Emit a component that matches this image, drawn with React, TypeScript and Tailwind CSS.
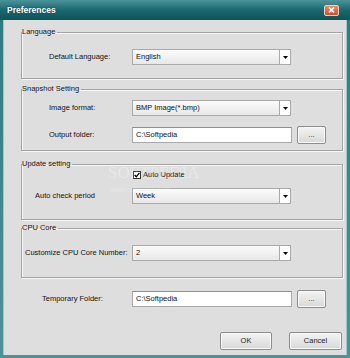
import type { ReactNode } from 'react';

const font = { fontFamily: '"Liberation Sans", Arial, sans-serif' };

function Arrow() {
  return (
    <svg width="5" height="3" viewBox="0 0 5 3" className="block">
      <polygon points="0,0 5,0 2.5,3" fill="#000" />
    </svg>
  );
}

function Select({ value }: { value: string }) {
  return (
    <div className="flex h-[16px] w-[159px] border border-[#a9a9a9]">
      <div className="flex flex-1 items-center bg-gradient-to-b from-[#fbfbfb] to-[#e8e8e8] pl-[3px] text-[#111]">
        {value}
      </div>
      <div className="flex w-[11px] items-center justify-center border-l border-[#a9a9a9] bg-white">
        <Arrow />
      </div>
    </div>
  );
}

function TextBox({ value }: { value: string }) {
  return (
    <div className="flex h-[16px] w-[160px] items-center border border-[#a9a9a9] border-t-[#8f8f8f] bg-white pl-[3px] text-[#111]">
      {value}
    </div>
  );
}

function Btn({ children, w }: { children: ReactNode; w: string }) {
  return (
    <button
      className={`flex h-[18px] ${w} items-center justify-center rounded-[2px] border border-[#8c8c8c] bg-gradient-to-b from-[#f4f4f4] to-[#d8d8d8] text-[#222] shadow-[inset_0_0_0_1px_#fafafa]`}
    >
      {children}
    </button>
  );
}

function Group({ title, className, children }: { title: string; className: string; children: ReactNode }) {
  return (
    <fieldset
      className={`border border-[#a3a3a3] shadow-[inset_1px_1px_0_#f7f7f7,1px_1px_0_#f7f7f7] ${className}`}
    >
      <legend className="ml-0 h-[12px] pr-[2px] leading-[12px] text-[#111]">{title}</legend>
      {children}
    </fieldset>
  );
}

function Row({ label, pl, children, className = '' }: { label: string; pl: string; children: ReactNode; className?: string }) {
  return (
    <div className={`flex items-center ${className}`}>
      <div className={`w-[110px] shrink-0 ${pl} text-[#111]`}>{label}</div>
      {children}
    </div>
  );
}

export default function App() {
  return (
    <div
      className="relative flex h-[358px] w-[350px] flex-col bg-gradient-to-b from-[#2e7a82] to-[#4d9298] text-[7.5px]"
      style={font}
    >
      <div className="flex h-[20px] shrink-0 items-center justify-between bg-gradient-to-b from-[#4a949a] via-[#1b6870] to-[#0e535a] pl-[7px] pr-[11px]">
        <span className="text-[8.5px] font-bold text-white [text-shadow:0_0_2px_#0a3a3f]">Preferences</span>
        <div className="flex h-[11px] w-[15px] items-center justify-center rounded-[2px] border border-[#f3d2c4] bg-gradient-to-b from-[#e98b6a] to-[#c9502b]">
          <svg width="7" height="6" viewBox="0 0 7 6">
            <path d="M1 0.5 L6 5.5 M6 0.5 L1 5.5" stroke="#fff" strokeWidth="1.6" />
          </svg>
        </div>
      </div>
      <div className="mx-[3px] mb-[3px] flex flex-1 flex-col border-l border-r border-[#9fc6c9] bg-[#dedede] pl-[17px] pr-[3px] pt-[6px]">
        <Group title="Language" className="pb-[13px]">
          <Row label="Default Language:" pl="pl-[27px]" className="mt-[11px]">
            <Select value="English" />
          </Row>
        </Group>

        <Group title="Snapshot Setting" className="mt-[4px] pb-[6px]">
          <Row label="Image format:" pl="pl-[27px]" className="mt-[5px]">
            <Select value="BMP Image(*.bmp)" />
          </Row>
          <Row label="Output folder:" pl="pl-[27px]" className="mt-[10px] h-[18px]">
            <TextBox value="C:\Softpedia" />
            <div className="ml-[5px]">
              <Btn w="w-[29px]">...</Btn>
            </div>
          </Row>
        </Group>

        <Group title="Update setting" className="mt-[7px] pb-[15px]">
          <div className="flex h-[10px] items-center pl-[111px]">
            <div className="flex h-[8px] w-[8px] items-center justify-center border border-[#333] bg-white">
              <svg width="6" height="6" viewBox="0 0 6 6">
                <path d="M0.6 3 L2.3 4.8 L5.4 0.8" stroke="#000" strokeWidth="1.3" fill="none" />
              </svg>
            </div>
            <span className="ml-[2px] text-[#111]">Auto Update</span>
          </div>
          <Row label="Auto check period" pl="pl-[13px]" className="mt-[8px]">
            <Select value="Week" />
          </Row>
        </Group>

        <Group title="CPU Core" className="mt-[2px] pb-[16px]">
          <Row label="Customize CPU Core Number:" pl="pl-[3px]" className="mt-[11px]">
            <Select value="2" />
          </Row>
        </Group>

        <div className="mt-[12px] flex h-[18px] items-center">
          <div className="w-[111px] shrink-0 pl-[21px] text-[#111]">Temporary Folder:</div>
          <TextBox value="C:\Softpedia" />
          <div className="ml-[5px]">
            <Btn w="w-[29px]">...</Btn>
          </div>
        </div>

        <div className="mt-[24px] flex justify-end gap-[17px] pr-[1px]">
          <Btn w="w-[52px]">OK</Btn>
          <Btn w="w-[53px]">Cancel</Btn>
        </div>
      </div>

      {/* faint watermark over the update group */}
      <div className="pointer-events-none absolute left-[108px] top-[163px] text-[17px] leading-[20px] text-white/30 [font-family:'Liberation_Serif',serif]">
        SOFTPEDIA
      </div>
      <div className="pointer-events-none absolute left-[110px] top-[186px] text-[7px] leading-[8px] text-white/25">
        www.softpedia.com
      </div>
    </div>
  );
}
